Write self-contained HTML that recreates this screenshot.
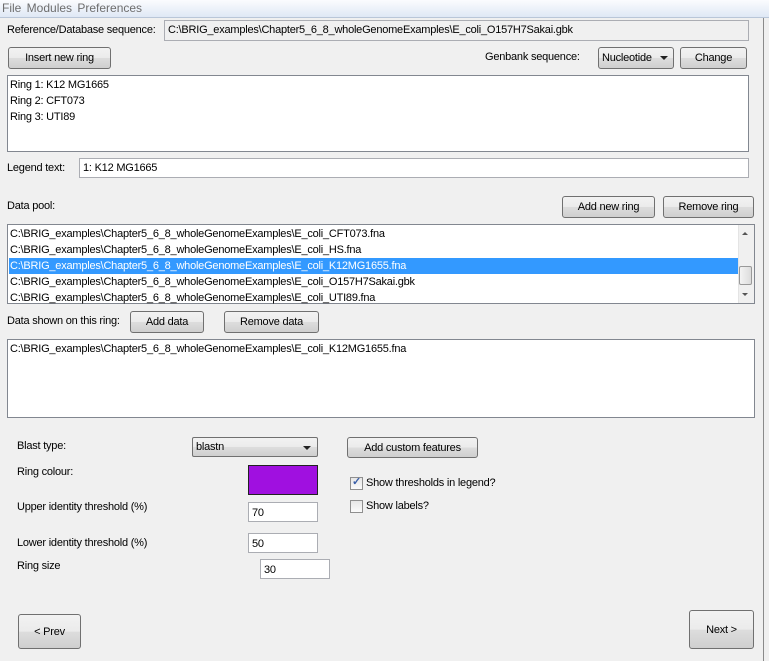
<!DOCTYPE html>
<html><head><meta charset="utf-8"><style>
*{box-sizing:border-box;margin:0;padding:0}
body{width:769px;height:661px;background:#f0f0f0;font-family:"Liberation Sans",sans-serif;font-size:11px;letter-spacing:-0.22px;color:#000;position:relative;overflow:hidden}
.a{position:absolute;white-space:nowrap}
.btn{position:absolute;border:1px solid #707070;border-radius:3px;background:linear-gradient(#f2f2f2 0%,#ebebeb 50%,#dddddd 51%,#cfcfcf 100%);text-align:center;display:flex;align-items:center;justify-content:center}
.fld{position:absolute;background:#fff;border:1px solid #abadb3}
.lst{position:absolute;background:#fff;border:1px solid #828790}
.row{position:absolute;left:1px;height:16px;line-height:16px;padding-left:1px}
.cb{position:absolute;width:13px;height:13px;border:1px solid #8f8f8f;background:linear-gradient(#e6e6e6,#fbfbfb)}
</style></head><body>
<div class="a" style="left:0;top:0;width:769px;height:18px;background:linear-gradient(#fbfcfe,#dfe8f5);border-bottom:1px solid #b9c6d8"></div>
<div class="a" style="left:2px;top:1px;font-size:12px;color:#6d6d6d;letter-spacing:0;word-spacing:2px">File Modules Preferences</div>
<div class="a" style="left:763px;top:18px;width:1px;height:643px;background:#8a8a8a"></div>

<div class="a" style="left:7px;top:24px">Reference/Database sequence:</div>
<div class="fld" style="left:164px;top:20px;width:585px;height:21px;background:#f0f0f0;padding:3px 0 0 3px">C:\BRIG_examples\Chapter5_6_8_wholeGenomeExamples\E_coli_O157H7Sakai.gbk</div>

<div class="btn" style="left:8px;top:47px;width:103px;height:22px">Insert new ring</div>
<div class="a" style="left:485px;top:51px">Genbank sequence:</div>
<div class="btn" style="left:598px;top:47px;width:76px;height:22px;justify-content:flex-start;padding-left:3px">Nucleotide <span style="position:absolute;right:5px;top:8px;border-left:4px solid transparent;border-right:4px solid transparent;border-top:4px solid #222"></span></div>
<div class="btn" style="left:680px;top:47px;width:67px;height:22px">Change</div>

<div class="lst" style="left:7px;top:75px;width:742px;height:77px">
<div class="row" style="top:1px">Ring 1: K12 MG1665</div>
<div class="row" style="top:17px">Ring 2: CFT073</div>
<div class="row" style="top:33px">Ring 3: UTI89</div>
</div>

<div class="a" style="left:7px;top:162px">Legend text:</div>
<div class="fld" style="left:79px;top:158px;width:670px;height:20px;padding:3px 0 0 3px">1: K12 MG1665</div>

<div class="a" style="left:7px;top:200px">Data pool:</div>
<div class="btn" style="left:562px;top:196px;width:93px;height:22px">Add new ring</div>
<div class="btn" style="left:663px;top:196px;width:91px;height:22px">Remove ring</div>

<div class="lst" style="left:7px;top:224px;width:748px;height:80px">
<div class="row" style="top:1px">C:\BRIG_examples\Chapter5_6_8_wholeGenomeExamples\E_coli_CFT073.fna</div>
<div class="row" style="top:17px">C:\BRIG_examples\Chapter5_6_8_wholeGenomeExamples\E_coli_HS.fna</div>
<div class="row" style="top:33px;width:729px;background:#3399ff;color:#fff">C:\BRIG_examples\Chapter5_6_8_wholeGenomeExamples\E_coli_K12MG1655.fna</div>
<div class="row" style="top:49px">C:\BRIG_examples\Chapter5_6_8_wholeGenomeExamples\E_coli_O157H7Sakai.gbk</div>
<div class="row" style="top:65px">C:\BRIG_examples\Chapter5_6_8_wholeGenomeExamples\E_coli_UTI89.fna</div>
<div class="a" style="left:730px;top:0;width:16px;height:78px;background:#f0f0f0;border-left:1px solid #e4e4e4"></div>
<div class="a" style="left:734px;top:7px;border-left:3px solid transparent;border-right:3px solid transparent;border-bottom:3px solid #555"></div>
<div class="a" style="left:734px;top:68px;border-left:3px solid transparent;border-right:3px solid transparent;border-top:3px solid #555"></div>
<div class="a" style="left:731px;top:41px;width:13px;height:19px;border:1px solid #999;border-radius:2px;background:linear-gradient(90deg,#f4f4f4,#dcdcdc)"></div>
</div>

<div class="a" style="left:7px;top:315px">Data shown on this ring:</div>
<div class="btn" style="left:130px;top:311px;width:74px;height:22px">Add data</div>
<div class="btn" style="left:224px;top:311px;width:95px;height:22px">Remove data</div>

<div class="lst" style="left:7px;top:339px;width:748px;height:79px">
<div class="row" style="top:1px">C:\BRIG_examples\Chapter5_6_8_wholeGenomeExamples\E_coli_K12MG1655.fna</div>
</div>

<div class="a" style="left:17px;top:440px">Blast type:</div>
<div class="btn" style="left:192px;top:437px;width:126px;height:20px;justify-content:flex-start;padding-left:3px;border-radius:2px">blastn <span style="position:absolute;right:6px;top:8px;border-left:4px solid transparent;border-right:4px solid transparent;border-top:4px solid #222"></span></div>
<div class="btn" style="left:347px;top:437px;width:131px;height:21px">Add custom features</div>

<div class="a" style="left:17px;top:466px">Ring colour:</div>
<div class="a" style="left:248px;top:465px;width:70px;height:30px;background:#a010e0;border:1px solid #222"></div>

<div class="cb" style="left:350px;top:477px"><span style="position:absolute;left:1px;top:-3px;font-size:11px;color:#3a5fa8;font-weight:bold">✓</span></div>
<div class="a" style="left:366px;top:477px">Show thresholds in legend?</div>
<div class="cb" style="left:350px;top:500px"></div>
<div class="a" style="left:366px;top:500px">Show labels?</div>

<div class="a" style="left:17px;top:501px">Upper identity threshold (%)</div>
<div class="fld" style="left:248px;top:502px;width:70px;height:20px;padding:4px 0 0 3px">70</div>
<div class="a" style="left:17px;top:537px">Lower identity threshold (%)</div>
<div class="fld" style="left:248px;top:533px;width:70px;height:20px;padding:4px 0 0 3px">50</div>
<div class="a" style="left:17px;top:560px">Ring size</div>
<div class="fld" style="left:260px;top:559px;width:70px;height:20px;padding:4px 0 0 3px">30</div>

<div class="btn" style="left:18px;top:614px;width:63px;height:35px">&lt; Prev</div>
<div class="btn" style="left:689px;top:610px;width:65px;height:39px">Next &gt;</div>
</body></html>
